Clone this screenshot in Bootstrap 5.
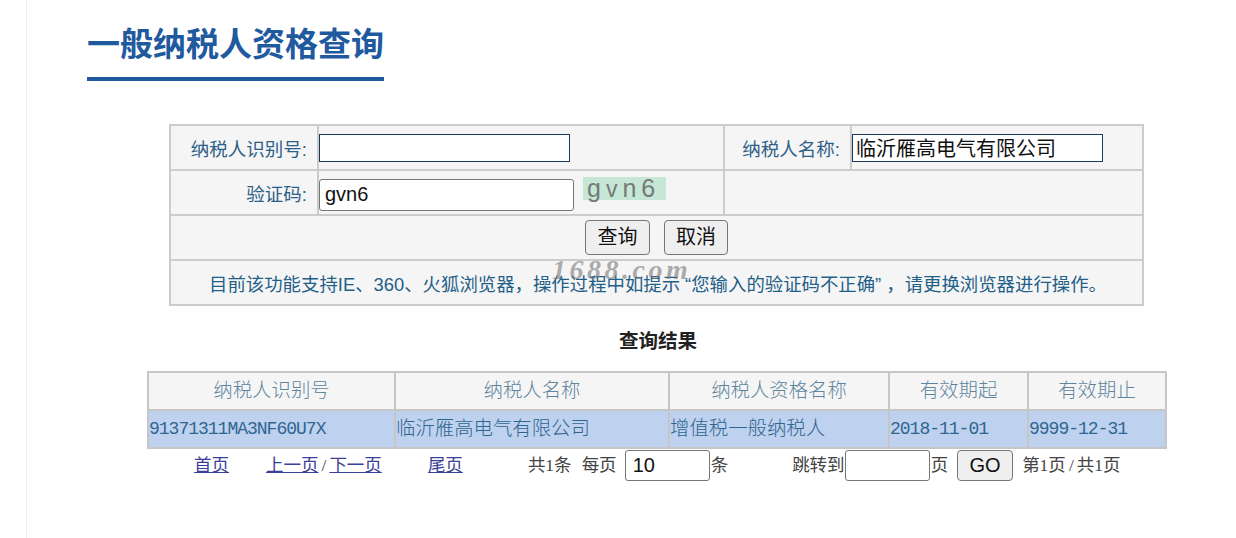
<!DOCTYPE html>
<html lang="zh-CN">
<head>
<meta charset="utf-8">
<title>一般纳税人资格查询</title>
<link href="https://cdn.jsdelivr.net/npm/bootstrap@5.3.0/dist/css/bootstrap.min.css" rel="stylesheet">
<style>
html,body{height:538px;overflow:hidden}
body{background:#fff;font-family:"Liberation Sans","Noto Sans CJK SC",sans-serif;color:#222}
.sheet{margin-left:26px;height:538px;border-left:1px solid #eee;padding-left:60px;position:relative}
.head-title{display:inline-block;margin:0;padding-top:24px;height:81px;border-bottom:4px solid #1f5a9f;color:#1f5a9f;font-size:33px;line-height:42px;font-weight:700;white-space:nowrap;width:297px}
.query-tb{table-layout:fixed;border-collapse:collapse;width:975px;margin:43px 0 0 82px;background:#f5f5f5;font-size:18.5px;color:#2d6087}
.query-tb td{border:2px solid #ccc;padding:0;height:45px}
.query-tb .lbl{text-align:right;padding:4px 10px 0 0}
.plain-in{display:block;border:1px solid #17395f;background:#fff;height:28px;width:251px;padding:2px 3px 0;font-size:20px;color:#111;font-family:"Liberation Sans","Noto Sans CJK SC",sans-serif;border-radius:0;outline:0}
.round-in{border:1px solid #767676;border-radius:3px;background:#fff;color:#111;font-size:20px;font-family:"Liberation Sans","Noto Sans CJK SC",sans-serif;outline:0}
.code-cell{padding-top:4px!important}
.code-in{width:255px;height:32px;padding:0 5px}
.captcha{width:83px;height:23px;background:#c6e7d5;color:#747b77;font-family:"Liberation Sans",sans-serif;font-size:25px;line-height:22px;letter-spacing:5px;padding-left:4px;margin:-12px 0 0 9px;white-space:nowrap}
.cap-small{font-size:23px}
.grey-btn{background:#efefef;border:1px solid #767676;border-radius:4px;color:#111;font-size:20px;padding:0;height:35px;line-height:33px}
.grey-btn:hover{background:#e5e5e5;border-color:#767676;color:#111}
.w-query{width:65px}.w-cancel{width:64px;margin-left:14px}
.notice{text-align:center;color:#1f5f88;font-size:18.4px;padding:4px 0 0 3px!important;white-space:nowrap}
.qt{margin:0 5px}
.result-title{margin:23px 0 0 0;width:1142px;text-align:center;font-family:"Liberation Serif","Noto Sans CJK SC",serif;font-size:19.5px;font-weight:700;line-height:26px;color:#222}
.result-tb{table-layout:fixed;border-collapse:collapse;width:1020px;margin:16px 0 0 60px;font-size:19.4px;color:#3c7197}
.result-tb th,.result-tb td{border:2px solid #c6c6c6;height:38px;padding:0;white-space:nowrap;font-weight:300}
.result-tb th{background:#f5f5f5;text-align:center;color:#5f859e}
.result-tb td{background:#bed1ef;color:#2f6690}
.mono-num{font-family:"Liberation Mono","Noto Sans CJK SC",monospace;font-size:18px;letter-spacing:-1px}
.pager{width:1020px;margin-left:60px;height:33px;font-size:17.5px;color:#444;white-space:nowrap;padding-left:47px;font-family:"Liberation Serif","Noto Sans CJK SC",serif}
.pager a{color:#3a3f9a;text-decoration:underline}
.slash{margin:0 3px}
.page-in{width:85px;height:31px;padding:0 7px}
.go-btn{width:56px;height:31px;line-height:29px;font-size:20px;font-family:"Liberation Sans",sans-serif}
.g1{margin-left:37px}.g2{margin-left:46px}.g3{margin-left:65px}.g4{margin-left:10px}.g5{margin-left:8px}.g6{margin-left:1px}.g7{margin-left:64px}.g8{margin-left:9px}
.watermark{position:absolute;left:525px;top:255px;font-family:"Liberation Serif",serif;font-style:italic;font-weight:700;font-size:28px;letter-spacing:3.5px;color:rgba(120,120,120,.6);line-height:30px;white-space:nowrap}
</style>
</head>
<body>
<div class="sheet">
  <h1 class="head-title">一般纳税人资格查询</h1>
  <table class="query-tb">
    <colgroup><col style="width:148px"><col style="width:406px"><col style="width:127px"><col></colgroup>
    <tr>
      <td class="lbl">纳税人识别号:</td>
      <td><input class="plain-in" type="text"></td>
      <td class="lbl">纳税人名称:</td>
      <td><input class="plain-in" type="text" value="临沂雁高电气有限公司"></td>
    </tr>
    <tr>
      <td class="lbl">验证码:</td>
      <td class="code-cell"><div class="d-flex align-items-center"><input class="round-in code-in" type="text" value="gvn6"><div class="captcha">g<span class="cap-small">v</span>n6</div></div></td>
      <td colspan="2"></td>
    </tr>
    <tr>
      <td colspan="4" class="text-center"><button class="btn grey-btn w-query" type="button">查询</button><button class="btn grey-btn w-cancel" type="button">取消</button></td>
    </tr>
    <tr>
      <td colspan="4" class="notice">目前该功能支持IE、360、火狐浏览器，操作过程中如提示<span class="qt">“您输入的验证码不正确”</span>，请更换浏览器进行操作。</td>
    </tr>
  </table>
  <div class="result-title">查询结果</div>
  <table class="result-tb">
    <colgroup><col style="width:247px"><col style="width:274px"><col style="width:220px"><col style="width:139px"><col></colgroup>
    <tr><th>纳税人识别号</th><th>纳税人名称</th><th>纳税人资格名称</th><th>有效期起</th><th>有效期止</th></tr>
    <tr><td class="mono-num">91371311MA3NF60U7X</td><td>临沂雁高电气有限公司</td><td>增值税一般纳税人</td><td class="mono-num">2018-11-01</td><td class="mono-num">9999-12-31</td></tr>
  </table>
  <div class="pager d-flex align-items-center">
    <a href="#">首页</a>
    <span class="g1"><a href="#">上一页</a><span class="slash">/</span><a href="#">下一页</a></span>
    <a href="#" class="g2">尾页</a>
    <span class="g3">共1条</span>
    <span class="g4">每页</span>
    <input class="round-in page-in g5" type="text" value="10">
    <span class="g6">条</span>
    <span class="g7">跳转到</span>
    <input class="round-in page-in" type="text">
    <span class="g6">页</span>
    <button class="btn grey-btn go-btn g8" type="button">GO</button>
    <span class="g8">第1页<span class="slash">/</span>共1页</span>
  </div>
  <div class="watermark">1688.com</div>
</div>
<script src="https://cdn.jsdelivr.net/npm/bootstrap@5.3.0/dist/js/bootstrap.bundle.min.js"></script>
</body>
</html>
